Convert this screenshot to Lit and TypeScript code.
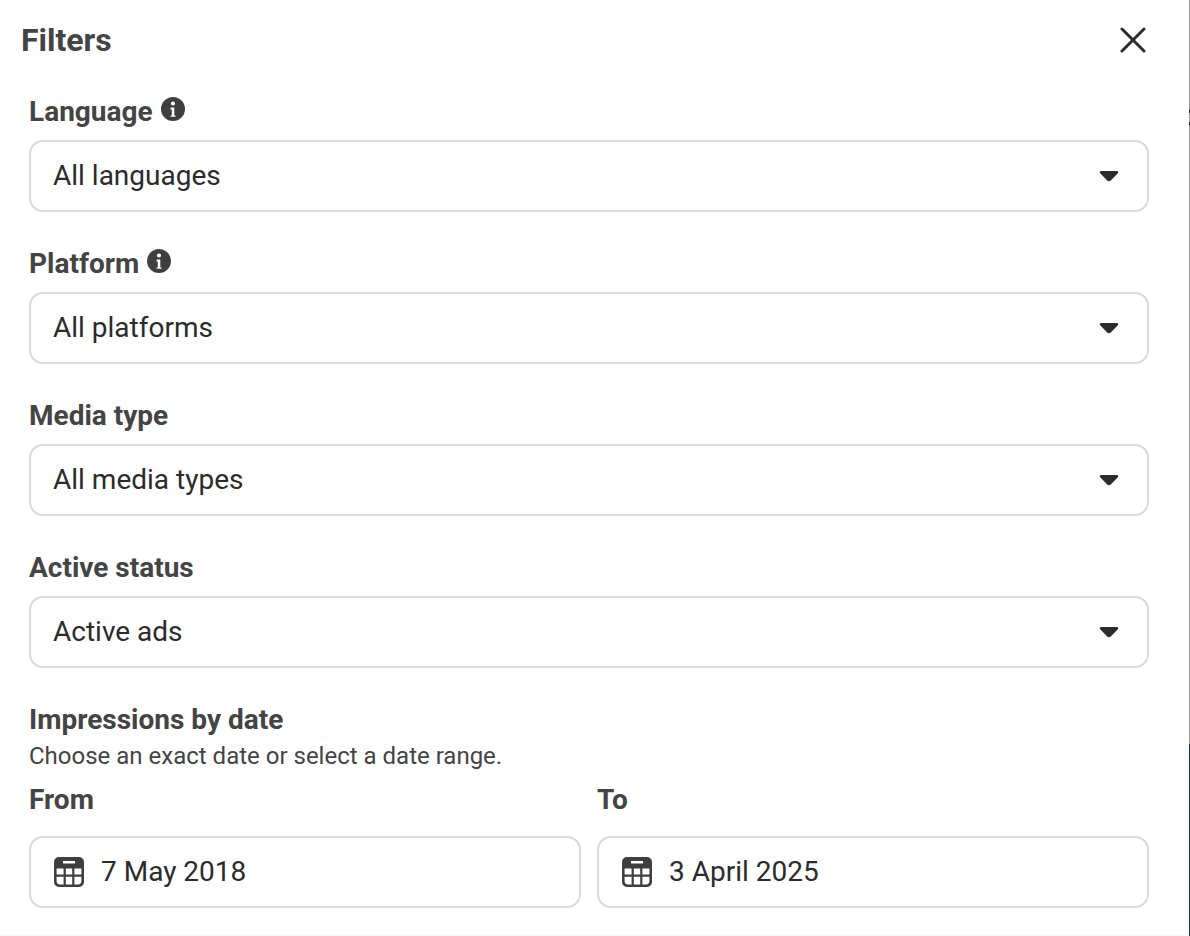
import { LitElement, html, css } from "lit";
import { customElement } from "lit/decorators.js";

const info = html`<svg class="info" viewBox="0 0 24 24" width="24" height="24" aria-hidden="true">
  <path fill-rule="evenodd" fill="#3f3f3f" d="M12 0a12 12 0 1 1 0 24a12 12 0 0 1 0-24ZM12 4.4a2.1 2.1 0 1 0 0 4.2a2.1 2.1 0 0 0 0-4.2ZM9.6 10.4v2h1.2v6h-1.2v1.4h5v-1.4h-1.3v-8Z"/>
</svg>`;

const caret = html`<svg class="caret" viewBox="0 0 20 14" width="20" height="14" aria-hidden="true">
  <path fill="#2b2b2b" d="M2.2 1h15.6c1.3 0 1.9 1.4 1 2.3l-7 7.2c-1 1-2.6 1-3.6 0l-7-7.2C.3 2.4.9 1 2.2 1Z"/>
</svg>`;

const calendar = html`<svg class="cal" viewBox="0 0 30 30" width="30" height="30" aria-hidden="true">
  <path fill-rule="evenodd" fill="#3f3f3f" d="M5 0h20a5 5 0 0 1 5 5v20a5 5 0 0 1-5 5H5a5 5 0 0 1-5-5V5a5 5 0 0 1 5-5ZM9 4v2.4h12V4ZM2.6 11.5v6h7v-6ZM11.8 11.5v6h6.4v-6ZM20.4 11.5v6h7v-6ZM2.6 19.7v4.3a3.4 3.4 0 0 0 3.4 3.4h3.6v-7.7ZM11.8 19.7v7.7h6.4v-7.7ZM20.4 19.7v7.7h3.6a3.4 3.4 0 0 0 3.4-3.4v-4.3Z"/>
</svg>`;

@customElement("app-root")
export class AppRoot extends LitElement {
  static styles = css`
    :host {
      display: block;
      width: 1190px;
      height: 936px;
      overflow: hidden;
      position: relative;
      box-sizing: border-box;
      background: #ffffff;
      font-family: Roboto, "Liberation Sans", sans-serif;
      color: #2b2b2b;
    }
    .panel {
      box-sizing: border-box;
      width: 1190px;
      height: 936px;
      padding: 0 41px 0 29px;
      border-bottom: 1px solid #f8f8f8;
      display: flex;
      flex-direction: column;
    }
    .head {
      height: 80px;
      margin-left: -8px;
      margin-right: 3px;
      display: flex;
      align-items: center;
      justify-content: space-between;
      flex: none;
    }
    h1 {
      margin: 0;
      font-size: 32px;
      line-height: 36px;
      font-weight: 700;
      color: #444444;
    }
    .close {
      display: block;
    }
    .field {
      height: 152px;
      flex: none;
      display: flex;
      flex-direction: column;
    }
    .label {
      display: flex;
      align-items: center;
      gap: 8px;
      height: 60px;
      padding-top: 4px;
      box-sizing: border-box;
      font-size: 28px;
      font-weight: 700;
      color: #444444;
      line-height: 32px;
    }
    .info {
      margin-top: -6px;
    }
    .select {
      box-sizing: border-box;
      height: 72px;
      border: 2px solid #dadada;
      border-radius: 14px;
      padding: 0 28px 0 22px;
      display: flex;
      align-items: center;
      justify-content: space-between;
      font-size: 28px;
      color: #2b2b2b;
      flex: none;
    }
    .value {
      margin-top: -2px;
    }
    .caret {
      margin-top: 2px;
    }
    .dates {
      display: flex;
      flex-direction: column;
    }
    .date-title {
      font-size: 28px;
      font-weight: 700;
      line-height: 32px;
      color: #444444;
      margin-top: 16px;
    }
    .hint {
      font-size: 24px;
      line-height: 28px;
      color: #444444;
      margin-top: 6px;
    }
    .cols {
      display: grid;
      grid-template-columns: 1fr 1fr;
      gap: 16px;
      margin-top: 13px;
    }
    .col .label {
      height: 53px;
      padding: 0 0 19px;
    }
    .date {
      gap: 17px;
      justify-content: flex-start;
      padding-left: 23px;
    }
    .rail {
      position: absolute;
      top: 0;
      right: 0;
      bottom: 0;
      width: 1px;
      background: linear-gradient(
        #9a9a9a 0 110px,
        #222222 110px 113px,
        #9a9a9a 113px 122px,
        #222222 122px 125px,
        #9a9a9a 125px 744px,
        #12296b 744px 936px
      );
    }
  `;

  private select(label: string, value: string, hasInfo: boolean) {
    return html`<div class="field">
      <div class="label"><span>${label}</span>${hasInfo ? info : ""}</div>
      <div class="select"><span class="value">${value}</span>${caret}</div>
    </div>`;
  }

  private date(label: string, value: string) {
    return html`<div class="col">
      <div class="label"><span>${label}</span></div>
      <div class="select date">${calendar}<span class="value">${value}</span></div>
    </div>`;
  }

  render() {
    return html`<div class="panel">
        <div class="head">
          <h1>Filters</h1>
          <svg class="close" viewBox="0 0 26 26" width="26" height="26" aria-hidden="true">
            <path d="M2 2 24 24M24 2 2 24" stroke="#2b2b2b" stroke-width="3" stroke-linecap="round" fill="none"/>
          </svg>
        </div>
        ${this.select("Language", "All languages", true)}
        ${this.select("Platform", "All platforms", true)}
        ${this.select("Media type", "All media types", false)}
        ${this.select("Active status", "Active ads", false)}
        <div class="dates">
          <div class="date-title">Impressions by date</div>
          <div class="hint">Choose an exact date or select a date range.</div>
          <div class="cols">
            ${this.date("From", "7 May 2018")}
            ${this.date("To", "3 April 2025")}
          </div>
        </div>
      </div>
      <div class="rail"></div>`;
  }
}
